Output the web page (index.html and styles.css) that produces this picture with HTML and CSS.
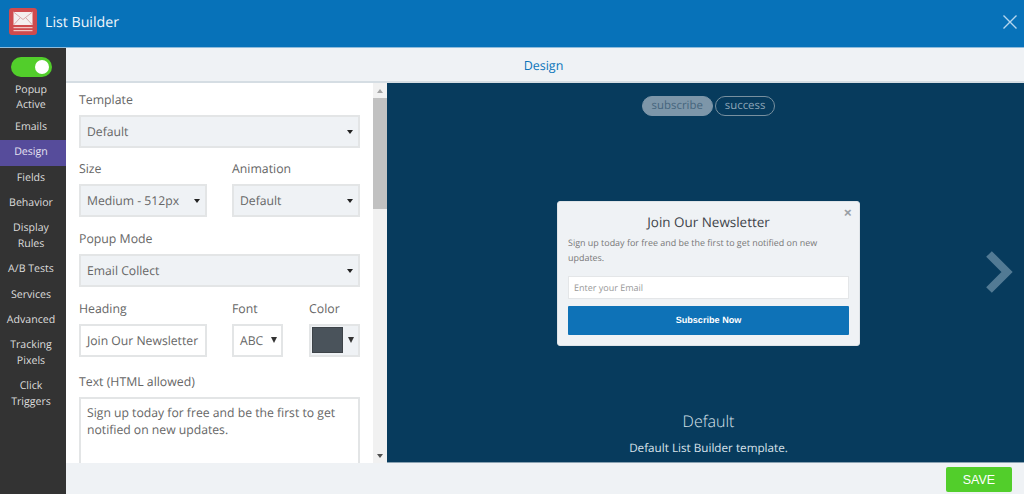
FILE: index.html
```html
<!DOCTYPE html>
<html lang="en">
<head>
<meta charset="utf-8">
<title>List Builder</title>
<link rel="stylesheet" href="styles.css">
</head>
<body>
<div class="app">
  <header class="topbar">
    <svg class="logo" width="28" height="27" viewBox="0 0 28 27">
      <rect x="0" y="0" width="28" height="27" rx="3" fill="#cf4b4e"/>
      <rect x="4.5" y="4" width="19" height="13" fill="#f4eeee"/>
      <path d="M4.5 4 L14 11.5 L23.5 4 M4.5 17 L11 10 M23.5 17 L17 10" fill="none" stroke="#d9a9aa" stroke-width="1"/>
      <rect x="4.5" y="19" width="19" height="1.2" fill="#f0c4c4"/>
      <rect x="4.5" y="22" width="19" height="1.2" fill="#f0c4c4"/>
    </svg>
    <div class="title">List Builder</div>
    <svg class="close" width="14" height="14" viewBox="0 0 14 14"><path d="M0.5 0.5 L13.5 13.5 M13.5 0.5 L0.5 13.5" stroke="#b5d6ee" stroke-width="1.4" fill="none"/></svg>
  </header>
  <div class="main">
    <nav class="side">
      <div class="toggle"><span class="knob"></span></div>
      <a class="nav first">Popup<br>Active</a>
      <a class="nav">Emails</a>
      <a class="nav active">Design</a>
      <a class="nav">Fields</a>
      <a class="nav">Behavior</a>
      <a class="nav">Display<br>Rules</a>
      <a class="nav">A/B Tests</a>
      <a class="nav">Services</a>
      <a class="nav">Advanced</a>
      <a class="nav">Tracking<br>Pixels</a>
      <a class="nav">Click<br>Triggers</a>
    </nav>
    <div class="content">
      <div class="tabbar">Design</div>
      <div class="panes">
        <section class="form">
          <div class="label">Template</div>
          <div class="select tight">Default<i class="caret"></i></div>
          <div class="row">
            <div class="col"><div class="label">Size</div><div class="select">Medium - 512px<i class="caret"></i></div></div>
            <div class="col"><div class="label">Animation</div><div class="select">Default<i class="caret"></i></div></div>
          </div>
          <div class="label">Popup Mode</div>
          <div class="select">Email Collect<i class="caret"></i></div>
          <div class="row">
            <div class="col"><div class="label">Heading</div><div class="input">Join Our Newsletter</div></div>
            <div class="col split">
              <div class="font"><div class="label">Font</div><div class="input fontbox">ABC<i class="caret small"></i></div></div>
              <div class="color"><div class="label">Color</div><div class="select swatchbox"><span class="swatch"></span><i class="caret small"></i></div></div>
            </div>
          </div>
          <div class="label">Text (HTML allowed)</div>
          <div class="textarea">Sign up today for free and be the first to get notified on new updates.</div>
        </section>
        <div class="scrollbar">
          <i class="arrow up"></i>
          <div class="thumb"></div>
          <i class="arrow down"></i>
        </div>
        <section class="preview">
          <div class="pills"><span class="pill on">subscribe</span><span class="pill">success</span></div>
          <div class="popup">
            <span class="px">×</span>
            <h2>Join Our Newsletter</h2>
            <p>Sign up today for free and be the first to get notified on new updates.</p>
            <div class="email">Enter your Email</div>
            <div class="sub">Subscribe Now</div>
          </div>
          <div class="tname">Default</div>
          <div class="tdesc">Default List Builder template.</div>
          <svg class="next" width="28" height="44" viewBox="0 0 28 44"><path d="M4 4 L22 22 L4 40" fill="none" stroke="#527a94" stroke-width="8"/></svg>
        </section>
      </div>
    </div>
  </div>
  <footer class="foot"><button class="save">SAVE</button></footer>
</div>
</body>
</html>
```
FILE: styles.css
```css
* { box-sizing: border-box; }
html, body { margin: 0; height: 100%; overflow: hidden; }
body { font-family: "Open Sans", sans-serif; color: #555; background: #eff2f5; text-rendering: geometricPrecision; }
.app { width: 1024px; height: 494px; display: flex; flex-direction: column; position: relative; }
.topbar { height: 48px; flex: none; background: #0772b9; display: flex; align-items: center; padding: 0 7px 4px 9px; border-bottom: 1px solid #8fbcdc; }
.logo { flex: none; }
.title { margin-left: 8px; padding-top: 1px; color: #f2f7fb; font-size: 14.2px; flex: 1; }
.main { flex: 1; display: flex; min-height: 0; }
.foot { height: 31px; flex: none; background: #eff2f5; display: flex; justify-content: flex-end; padding: 4px 12px 2px 0; margin-left: 66px; }
.side { width: 66px; flex: none; background: #333; margin-bottom: -31px; height: 446px; position: relative; z-index: 1; padding-top: 9px; }
.toggle { width: 41px; height: 20px; margin: 0 0 0 11px; background: #52ce2b; border-radius: 10px; position: relative; }
.knob { position: absolute; right: 3px; top: 3px; width: 14px; height: 14px; border-radius: 50%; background: #fff; }
.nav { display: block; color: #ddd; font-size: 10.6px; line-height: 15.4px; text-align: center; padding: 5px 4px 5px 0; }
.nav.first { padding: 6px 4px 1px 0; }
.nav.active { background: #564c9b; color: #e6e3f2; }
.content { flex: 1; min-width: 0; display: flex; flex-direction: column; }
.tabbar { height: 35px; flex: none; background: #eff2f5; border-bottom: 2px solid #d5dde3; color: #0a74ba; font-size: 12.5px; text-align: center; line-height: 35px; padding-right: 3px; }
.panes { flex: 1; min-height: 0; display: flex; }
.form { width: 307px; flex: none; background: #fff; padding: 9px 13px 0; overflow: hidden; }
.label { color: #666; font-size: 12.3px; line-height: 16px; height: 17px; margin-bottom: 6px; }
.select, .input, .textarea { border: 2px solid #e3e5e6; color: #666; font-size: 12.2px; }
.select, .input { height: 33px; line-height: 29px; padding-left: 6px; position: relative; white-space: nowrap; }
.select { background: #eff2f5; margin-bottom: 14px; }
.select.tight { margin-bottom: 13px; }
.input { background: #fff; margin-bottom: 17px; }
.caret { position: absolute; right: 5px; top: 13px; width: 0; height: 0; border: 3.5px solid transparent; border-top: 4px solid #222; border-bottom: 0; }
.caret.small { right: 4px; top: 11px; border-width: 6px 3px 0; border-top-color: #333; }
.row { display: flex; gap: 25px; }
.col { width: 128px; flex: none; }
.split { display: flex; gap: 26px; }
.font, .color { width: 51px; flex: none; }
.swatchbox { padding: 0; margin-bottom: 17px; }
.swatch { position: absolute; left: 1px; top: 1px; width: 31px; height: 26px; background: #4a535b; border: 1px solid #3d4348; }
.textarea { height: 90px; padding: 6px 6px; line-height: 16.5px; background: #fff; }
.scrollbar { width: 14px; flex: none; background: #f1f1f1; position: relative; display: flex; flex-direction: column; align-items: center; justify-content: space-between; padding: 6px 0 5px; }
.thumb { position: absolute; top: 15px; left: 0; width: 14px; height: 111px; background: #c1c1c1; }
.arrow { width: 0; height: 0; border-left: 3.5px solid transparent; border-right: 3.5px solid transparent; }
.arrow.up { border-bottom: 4px solid #a3a3a3; }
.arrow.down { border-top: 4px solid #505050; }
.preview { flex: 1; min-width: 0; background: #073b5d; display: flex; flex-direction: column; align-items: center; position: relative; border-bottom: 1px solid #8aa2b2; overflow: hidden; padding-left: 6px; }
.pills { display: flex; gap: 2px; margin-top: 13px; height: 20px; }
.pill { height: 20px; border-radius: 10px; border: 1px solid #78909f; color: #8ca5b7; font-size: 11.4px; line-height: 17px; padding: 0 9px; }
.pill.on { background: #7d96a9; border-color: #7d96a9; color: #45657d; }
.popup { position: relative; width: 303px; height: 145px; margin-top: 85px; background: #eff2f5; border: 1px solid #dfe4e8; border-radius: 3px; padding: 0 10px; }
.px { position: absolute; right: 7px; top: 2px; color: #9aa0a5; font-size: 15px; line-height: 18px; font-weight: 700; }
.popup h2 { margin: 9px 0 0; font-size: 13.45px; font-weight: 400; line-height: 22px; text-align: center; color: #3e444a; }
.popup p { margin: 2px 0 0; font-size: 8.95px; line-height: 15px; color: #777; }
.email { height: 23px; margin-top: 11px; background: #fff; border: 1px solid #e4e6e8; color: #999; font-size: 9px; line-height: 21px; padding-left: 5px; }
.sub { height: 29px; margin-top: 7px; background: #0e72b7; border-radius: 1px; color: #fff; font-family: "Liberation Sans", sans-serif; font-size: 9.1px; font-weight: 700; line-height: 29px; text-align: center; }
.tname { margin-top: 64px; font-size: 16px; line-height: 22px; color: #d8e2ea; font-weight: 300; }
.tdesc { margin-top: 8px; font-size: 11.7px; line-height: 17px; color: #d8e2ea; }
.next { position: absolute; right: 11px; top: 167px; }
.save { width: 66px; height: 25px; background: #52ce2b; border: 0; border-radius: 2px; color: #fff; font-family: "Liberation Sans", sans-serif; font-size: 12.5px; padding: 0; }
```
